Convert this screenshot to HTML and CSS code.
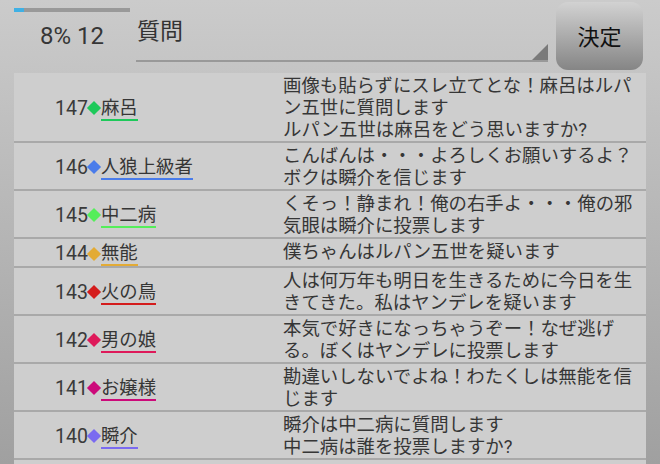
FILE: index.html
```html
<!DOCTYPE html>
<html lang="ja">
<head>
    <meta charset="UTF-8">
    <meta name="viewport" content="width=device-width, initial-scale=1.0">
    <title>質問</title>
    <link rel="stylesheet" href="styles.css">
</head>
<body>
    <div class="top">
        <div class="status">
            <div class="progress"><div class="progress-fill" style="width:9%"></div></div>
            <div class="count">8% 12</div>
        </div>
        <div class="field"><span class="field-text">質問</span></div>
        <button class="submit">決定</button>
    </div>
    <ul class="log">
        <li class="entry">
            <div class="who"><span class="no">147</span><span class="mark green"></span><span class="name green">麻呂</span></div>
            <div class="msg">画像も貼らずにスレ立てとな！麻呂はルパン五世に質問します<br>ルパン五世は麻呂をどう思いますか?</div>
        </li>
        <li class="entry">
            <div class="who"><span class="no">146</span><span class="mark blue"></span><span class="name blue">人狼上級者</span></div>
            <div class="msg">こんばんは・・・よろしくお願いするよ？<br>ボクは瞬介を信じます</div>
        </li>
        <li class="entry">
            <div class="who"><span class="no">145</span><span class="mark lime"></span><span class="name lime">中二病</span></div>
            <div class="msg">くそっ！静まれ！俺の右手よ・・・俺の邪気眼は瞬介に投票します</div>
        </li>
        <li class="entry">
            <div class="who"><span class="no">144</span><span class="mark orange"></span><span class="name orange">無能</span></div>
            <div class="msg">僕ちゃんはルパン五世を疑います</div>
        </li>
        <li class="entry">
            <div class="who"><span class="no">143</span><span class="mark red"></span><span class="name red">火の鳥</span></div>
            <div class="msg">人は何万年も明日を生きるために今日を生きてきた。私はヤンデレを疑います</div>
        </li>
        <li class="entry">
            <div class="who"><span class="no">142</span><span class="mark crimson"></span><span class="name crimson">男の娘</span></div>
            <div class="msg">本気で好きになっちゃうぞー！なぜ逃げる。ぼくはヤンデレに投票します</div>
        </li>
        <li class="entry">
            <div class="who"><span class="no">141</span><span class="mark magenta"></span><span class="name magenta">お嬢様</span></div>
            <div class="msg">勘違いしないでよね！わたくしは無能を信じます</div>
        </li>
        <li class="entry">
            <div class="who"><span class="no">140</span><span class="mark violet"></span><span class="name violet">瞬介</span></div>
            <div class="msg">瞬介は中二病に質問します<br>中二病は誰を投票しますか?</div>
        </li>
    </ul>
</body>
</html>
```

FILE: styles.css
```css
html, body {
    margin: 0;
    height: 464px;
    overflow: hidden;
}
body {
    font-family: Roboto, "Noto Sans CJK JP", sans-serif;
    color: #363636;
    background: linear-gradient(#cbcbcb, #a0a0a0);
    display: flex;
    flex-direction: column;
}
.top {
    display: flex;
    height: 73px;
    padding-left: 14px;
    flex-shrink: 0;
}
.status {
    width: 116px;
}
.progress {
    margin-top: 8px;
    height: 4px;
    background-color: #999;
}
.progress-fill {
    height: 100%;
    background-color: #3fb0e4;
}
.count {
    margin-top: 10px;
    font-size: 24px;
    line-height: 28px;
    text-align: center;
}
.field {
    position: relative;
    margin-left: 6px;
    width: 412px;
    height: 60px;
    border-bottom: 2px solid #999;
    box-sizing: content-box;
}
.field::after {
    content: "";
    position: absolute;
    right: 0;
    bottom: 0;
    border-style: solid;
    border-width: 0 0 16px 16px;
    border-color: transparent transparent #7a7a7a transparent;
}
.field-text {
    display: block;
    padding-top: 17px;
    padding-left: 1px;
    font-size: 23px;
    line-height: 30px;
    color: #333;
}
.submit {
    margin: 2px 0 0 8px;
    width: 87px;
    height: 68px;
    border: none;
    border-radius: 12px;
    background: linear-gradient(#d2d2d2, #858585);
    font-family: "Noto Sans CJK JP", sans-serif;
    font-size: 22px;
    color: #111;
    padding: 0 0 2px;
}
.log {
    list-style: none;
    margin: 0 0 0 14px;
    padding: 0;
    width: 632px;
    flex: 1;
    background-color: #cecece;
}
.entry {
    display: flex;
    padding-top: 2px;
    border-bottom: 2px solid #a9a9a9;
}
.who {
    width: 228px;
    padding-left: 41px;
    display: flex;
    align-items: center;
}
.no {
    font-size: 19.5px;
    color: #3a3a3a;
}
.mark {
    width: 10px;
    height: 10px;
    margin: 0 2px 0 1px;
    transform: rotate(45deg);
    background-color: currentColor;
}
.name {
    font-size: 18.4px;
    line-height: 20px;
    padding-bottom: 1px;
    border-bottom: 2px solid currentColor;
    margin-top: 2px;
}
.name::first-line {
    color: #363636;
}
.msg {
    width: 356px;
    font-size: 18.4px;
    line-height: 22px;
    color: #363636;
}
.green { color: #1ec95a; }
.blue { color: #4a7cea; }
.lime { color: #55ee5a; }
.orange { color: #e3ab35; }
.red { color: #d41c1c; }
.crimson { color: #de1a5a; }
.magenta { color: #cc0a7a; }
.violet { color: #7a6af0; }
```
